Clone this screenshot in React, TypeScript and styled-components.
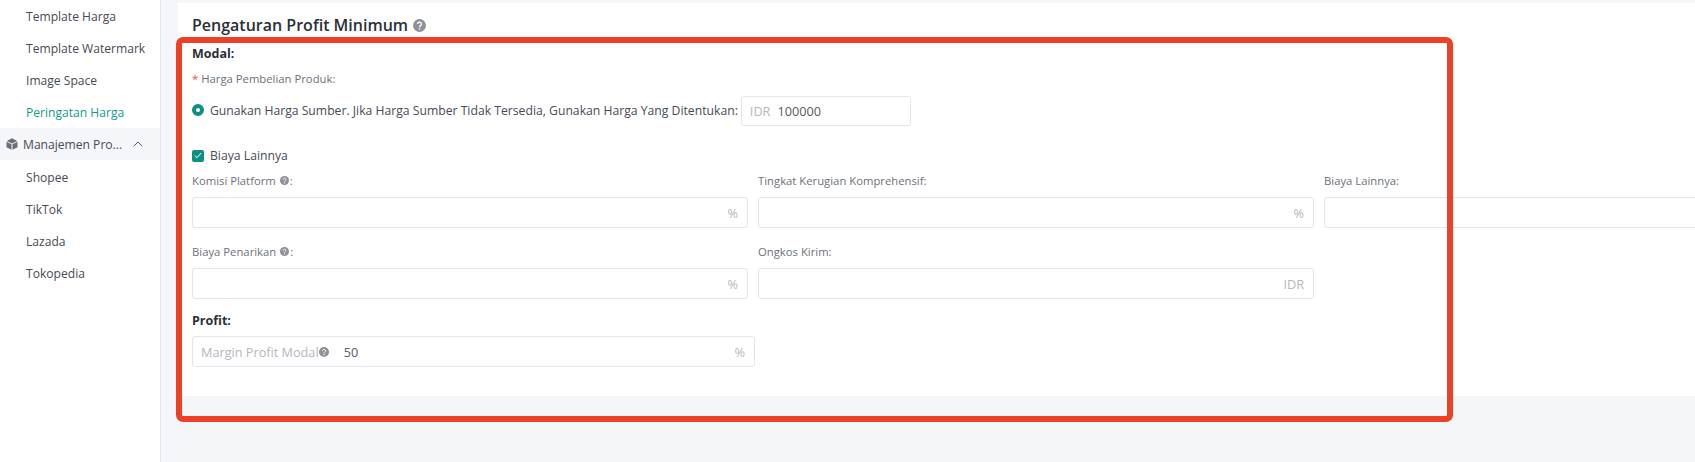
import React from "react";
import styled, { createGlobalStyle } from "styled-components";

const Global = createGlobalStyle`
  html, body { margin: 0; padding: 0; background: #f5f6fa; }
  body { font-family: "Open Sans", "Noto Sans", "Liberation Sans", sans-serif; }
  * { box-sizing: border-box; }
`;

const Page = styled.div`
  position: relative;
  display: flex;
  width: 1695px;
  height: 462px;
  overflow: hidden;
  background: #f5f6fa;
`;
const Sidebar = styled.nav`
  flex: 0 0 161px;
  height: 100%;
  background: #fff;
  border-right: 1px solid #e3e5ec;
`;
const MenuItem = styled.div<{ $active?: boolean }>`
  height: 32px;
  padding-left: 26px;
  display: flex;
  align-items: center;
  font-size: 12.1px;
  color: ${(p) => (p.$active ? "#149a8b" : "#474b56")};
`;
const MenuGroup = styled.div`
  height: 32px;
  padding: 0 17px 0 6px;
  display: flex;
  align-items: center;
  gap: 5px;
  background: #f5f6fa;
  font-size: 12.1px;
  color: #474b56;
  span { flex: 1; white-space: nowrap; }
`;
const SubMenu = styled.div`
  margin-top: 1px;
`;
const Main = styled.main`
  flex: 1;
  min-width: 0;
  padding: 3px 0 0 17px;
`;
const Card = styled.section`
  background: #fff;
  padding: 11px 14px 30px;
  height: 393px;
  overflow: hidden;
`;
const Title = styled.h2`
  margin: 0;
  display: flex;
  align-items: center;
  gap: 5px;
  height: 22px;
  font-size: 16px;
  font-weight: 600;
  color: #2b2f38;
`;
const SectionLabel = styled.div<{ $top: number }>`
  margin-top: ${(p) => p.$top}px;
  height: 18px;
  line-height: 18px;
  font-size: 12.5px;
  font-weight: 700;
  color: #2b2f38;
`;
const FieldLabel = styled.div<{ $top?: number }>`
  margin-top: ${(p) => p.$top ?? 0}px;
  height: 18px;
  display: flex;
  align-items: center;
  gap: 4px;
  font-size: 11.3px;
  color: #6d717c;
  i { color: #ef4a4a; font-style: normal; }
`;
const OptionRow = styled.label<{ $top: number }>`
  margin-top: ${(p) => p.$top}px;
  display: flex;
  align-items: center;
  gap: 7px;
  font-size: 12.2px;
  color: #474b56;
  white-space: nowrap;
`;
const Radio = styled.span`
  width: 12px;
  height: 12px;
  margin: 0 -1px 2px 0;
  border-radius: 50%;
  border: 4px solid #0e9080;
  background: #fff;
  flex: none;
`;
const RadioText = styled.span`
  margin: 0 -4px 2px 0;
`;
const Check = styled.span`
  width: 12px;
  height: 12px;
  margin-right: -1px;
  border-radius: 2px;
  background: #0e9080;
  flex: none;
  display: flex;
  align-items: center;
  justify-content: center;
`;
const Box = styled.div<{ $width?: number; $height?: number; $top?: number }>`
  width: ${(p) => (p.$width ? `${p.$width}px` : "100%")};
  height: ${(p) => p.$height ?? 31}px;
  margin-top: ${(p) => p.$top ?? 0}px;
  flex: none;
  display: flex;
  align-items: center;
  padding: 0 9px 0 8px;
  background: #fff;
  border: 1px solid #e3e5ea;
  border-radius: 3px;
  font-size: 12.7px;
`;
const Affix = styled.span<{ $gap?: number }>`
  color: #b4b7c0;
  margin-right: ${(p) => p.$gap ?? 0}px;
  white-space: nowrap;
  display: flex;
  align-items: center;
`;
const Value = styled.span`
  flex: 1;
  color: #555964;
`;
const Fields = styled.div`
  margin-top: 7px;
  display: grid;
  grid-template-columns: repeat(3, 556px);
  gap: 14px 10px;
  ${FieldLabel} { margin-bottom: 8px; }
`;
const Help = styled.svg`
  flex: none;
  display: inline-block;
`;
const HelpColon = styled.span`
  margin-left: -3px;
`;
const Frame = styled.div`
  position: absolute;
  left: 176px;
  top: 37px;
  width: 1277px;
  height: 385px;
  border: 6px solid #ee4026;
  border-radius: 7px;
  pointer-events: none;
`;

const HelpIcon = ({ size = 9 }: { size?: number }) => (
  <Help width={size} height={size} viewBox="0 0 16 16" aria-hidden="true">
    <circle cx="8" cy="8" r="8" fill="#8f9199" />
    <path d="M5.6 6.2a2.4 2.4 0 1 1 3.7 2c-.9.6-1.3 1-1.3 1.9" fill="none" stroke="#fff" strokeWidth="1.6" />
    <circle cx="8" cy="12.3" r="1" fill="#fff" />
  </Help>
);

const Cube = () => (
  <svg width="12" height="12" viewBox="0 0 12 12" aria-hidden="true" style={{ flex: "none" }}>
    <path d="M6 0.3 11.2 2.9 6 5.4 0.8 2.9Z" fill="#6b6e78" />
    <path d="M0.5 3.7 5.5 6.2V11.8L0.5 9.2Z" fill="#6b6e78" />
    <path d="M11.5 3.7 6.5 6.2V11.8L11.5 9.2Z" fill="#6b6e78" />
  </svg>
);

const Chevron = () => (
  <svg width="10" height="6" viewBox="0 0 10 6" aria-hidden="true" style={{ flex: "none" }}>
    <path d="M0.7 5.2 5 1 9.3 5.2" fill="none" stroke="#555964" strokeWidth="1" />
  </svg>
);

const topItems = ["Template Harga", "Template Watermark", "Image Space"];
const subItems = ["Shopee", "TikTok", "Lazada", "Tokopedia"];

const fields: { label: string; help?: boolean; unit?: string }[] = [
  { label: "Komisi Platform", help: true, unit: "%" },
  { label: "Tingkat Kerugian Komprehensif:", unit: "%" },
  { label: "Biaya Lainnya:" },
  { label: "Biaya Penarikan", help: true, unit: "%" },
  { label: "Ongkos Kirim:", unit: "IDR" },
];

export default function App() {
  return (
    <Page>
      <Global />
      <Sidebar>
        {topItems.map((t) => (
          <MenuItem key={t}>{t}</MenuItem>
        ))}
        <MenuItem $active>Peringatan Harga</MenuItem>
        <MenuGroup>
          <Cube />
          <span>Manajemen Pro...</span>
          <Chevron />
        </MenuGroup>
        <SubMenu>
          {subItems.map((t) => (
            <MenuItem key={t}>{t}</MenuItem>
          ))}
        </SubMenu>
      </Sidebar>
      <Main>
        <Card>
          <Title>
            Pengaturan Profit Minimum <HelpIcon size={13} />
          </Title>
          <SectionLabel $top={9}>Modal:</SectionLabel>
          <FieldLabel $top={6}>
            <span><i>*</i> Harga Pembelian Produk:</span>
          </FieldLabel>
          <OptionRow $top={9}>
            <Radio />
            <RadioText>
              Gunakan Harga Sumber. Jika Harga Sumber Tidak Tersedia, Gunakan Harga Yang Ditentukan:
            </RadioText>
            <Box $width={170} $height={30}>
              <Affix $gap={7}>IDR</Affix>
              <Value>100000</Value>
            </Box>
          </OptionRow>
          <OptionRow $top={21}>
            <Check>
              <svg width="8" height="7" viewBox="0 0 8 7" aria-hidden="true">
                <path d="M0.8 3.6 3 5.7 7.2 1" fill="none" stroke="#fff" strokeWidth="1" />
              </svg>
            </Check>
            <span>Biaya Lainnya</span>
          </OptionRow>
          <Fields>
            {fields.map((f) => (
              <div key={f.label}>
                <FieldLabel>
                  {f.label}
                  {f.help && (
                    <>
                      <HelpIcon />
                      <HelpColon>:</HelpColon>
                    </>
                  )}
                </FieldLabel>
                <Box>
                  <Value />
                  {f.unit && <Affix>{f.unit}</Affix>}
                </Box>
              </div>
            ))}
          </Fields>
          <SectionLabel $top={13}>Profit:</SectionLabel>
          <Box $width={563} $height={31} $top={6}>
            <Affix $gap={15}>
              Margin Profit Modal
              <HelpIcon size={10} />
            </Affix>
            <Value>50</Value>
            <Affix>%</Affix>
          </Box>
        </Card>
      </Main>
      <Frame />
    </Page>
  );
}
